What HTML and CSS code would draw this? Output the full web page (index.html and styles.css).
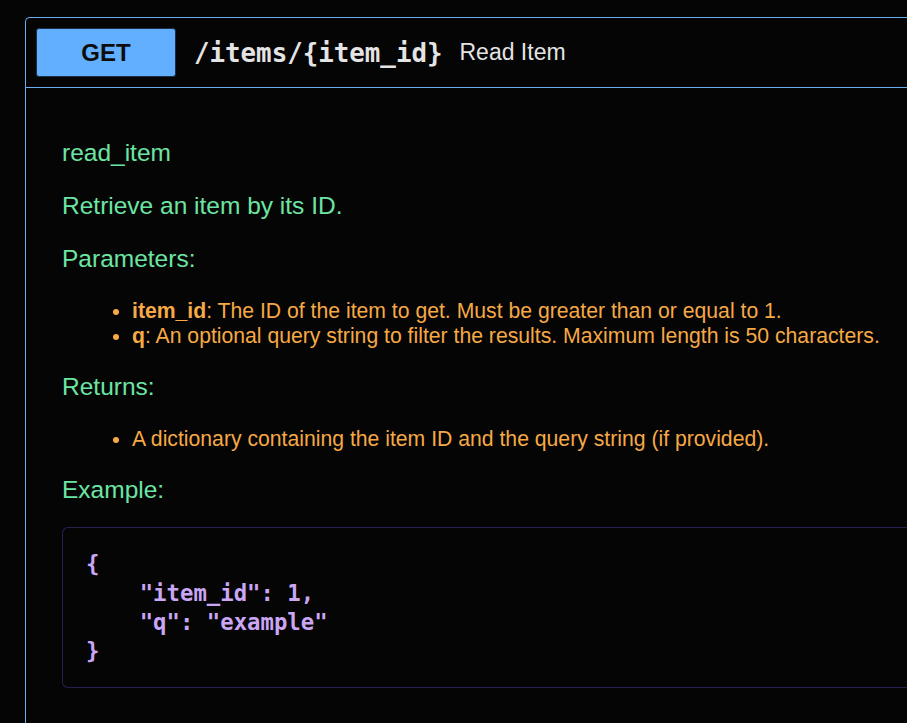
FILE: index.html
```html
<!DOCTYPE html>
<html lang="en">
<head>
<meta charset="utf-8">
<title>Read Item</title>
<link rel="stylesheet" href="styles.css">
</head>
<body>
<div class="opblock">
  <div class="summary">
    <span class="method">GET</span>
    <span class="path">/items/{item_id}</span>
    <span class="desc">Read Item</span>
  </div>
  <div class="body">
    <p class="green">read_item</p>
    <p class="green">Retrieve an item by its ID.</p>
    <p class="green">Parameters:</p>
    <ul class="list">
      <li><strong>item_id</strong>: The ID of the item to get. Must be greater than or equal to 1.</li>
      <li><strong>q</strong>: An optional query string to filter the results. Maximum length is 50 characters.</li>
    </ul>
    <p class="green">Returns:</p>
    <ul class="list">
      <li>A dictionary containing the item ID and the query string (if provided).</li>
    </ul>
    <p class="green last">Example:</p>
    <pre class="code">{
    "item_id": 1,
    "q": "example"
}</pre>
  </div>
</div>
</body>
</html>
```
FILE: styles.css
```css
html, body {
  margin: 0;
  padding: 0;
  background: #050505;
  overflow: hidden;
  height: 100%;
}
body {
  padding: 17px 0 0 25px;
  box-sizing: border-box;
  font-family: "Liberation Sans", Arial, sans-serif;
}
.opblock {
  width: 1000px;
  min-height: 800px;
  border: 1px solid #6aaef0;
  border-right: none;
  border-top-left-radius: 5px;
}
.summary {
  display: flex;
  align-items: center;
  padding: 10px;
  border-bottom: 1px solid #6aaef0;
}
.method {
  display: flex;
  align-items: center;
  justify-content: center;
  width: 140px;
  height: 49px;
  box-sizing: border-box;
  background: #61affe;
  border: 1px solid #1c2e45;
  border-radius: 3px;
  color: #0d0d0d;
  font-weight: bold;
  font-size: 24px;
  font-family: "Liberation Sans", Arial, sans-serif;
}
.path {
  margin-left: 18px;
  font-family: "DejaVu Sans Mono", monospace;
  font-weight: bold;
  font-size: 25.8px;
  color: #e4e4e4;
}
.desc {
  margin-left: 17px;
  font-size: 23px;
  color: #e4e4e4;
}
.body {
  padding: 26px 36px;
}
.green {
  color: #6ce5a4;
  font-size: 24.5px;
  margin: 25px 0;
}
.green.last {
  margin-bottom: 23px;
}
.list {
  color: #f6a945;
  font-size: 21.2px;
  margin: 25px 0;
  padding-left: 70px;
  line-height: 25px;
}
.list strong {
  font-weight: bold;
}
.code {
  margin: 23px 0 0 0;
  padding: 22px 23px 21px 23px;
  border: 1px solid #2b1f52;
  border-right: none;
  border-radius: 6px 0 0 6px;
  color: #caa6f5;
  font-family: "DejaVu Sans Mono", monospace;
  font-weight: bold;
  font-size: 22.3px;
  line-height: 29px;
}
```
